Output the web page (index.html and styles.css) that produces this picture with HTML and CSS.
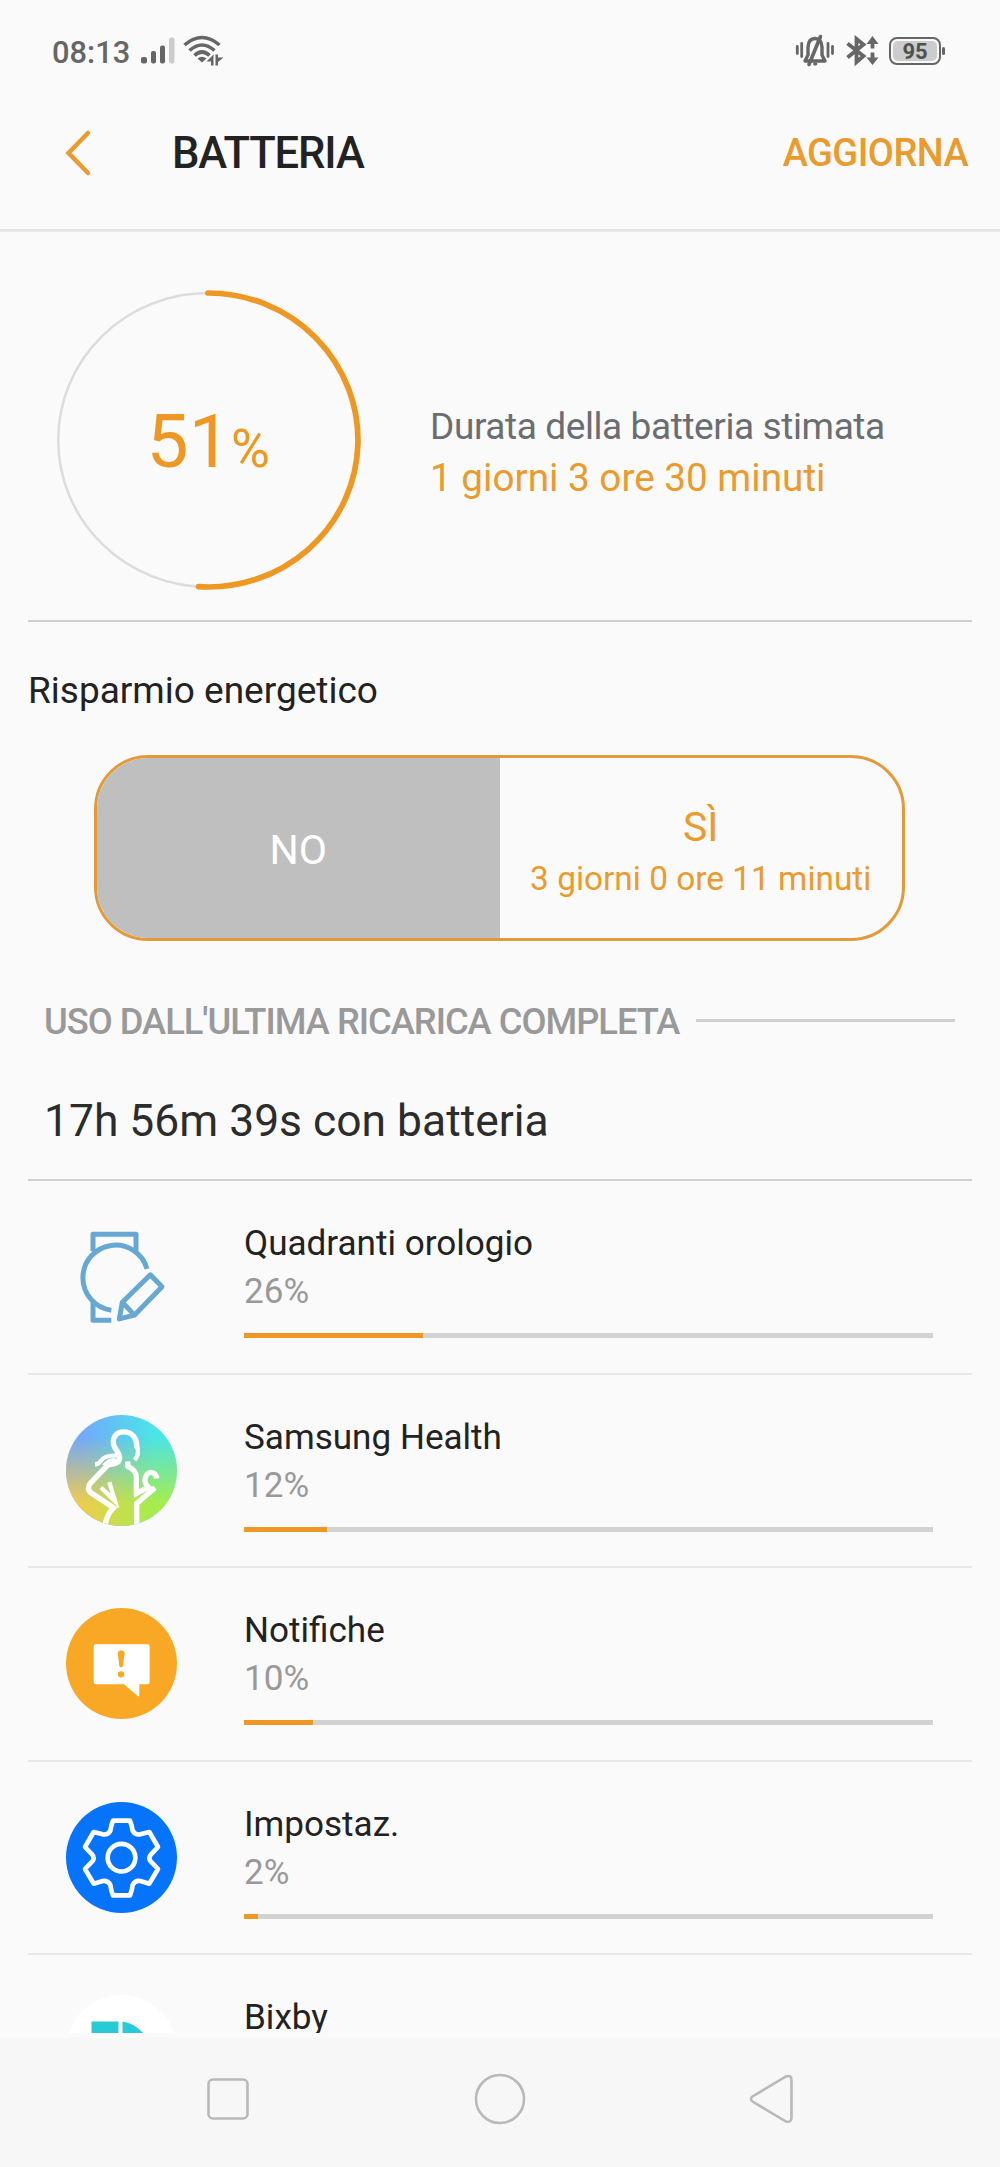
FILE: index.html
```html
<!DOCTYPE html>
<html lang="it">
<head>
<meta charset="utf-8">
<title>Batteria</title>
<link rel="stylesheet" href="styles.css">
</head>
<body>
<div class="screen">
  <div class="status">
    <span class="time">08:13</span>
    <svg class="signal" width="36" height="28" viewBox="0 0 36 28">
      <g fill="#666"><rect x="1" y="20" width="6" height="6.5" rx="2"/><rect x="11" y="14" width="5" height="12.5" rx="2"/><rect x="20" y="8.5" width="5" height="18" rx="2"/></g>
      <rect x="29" y="0.5" width="5.5" height="26" rx="2" fill="#ccc"/>
    </svg>
    <svg class="wifi" width="42" height="32" viewBox="0 0 42 32">
      <g fill="none" stroke="#666" stroke-width="3.6"><path d="M1.500 10Q19-5 36.500 10"/><path d="M6.500 15.500Q19 4.500 31.500 15.500"/><path d="M11.500 20.500Q19 13.500 26.500 20.500"/></g>
      <path d="M14.500 23.500Q19 20 23.500 23.500L19 27.500Z" fill="#666"/>
      <path d="M23.500 26.500L30.500 19.500V30.500H28V26.500ZM32.500 19.500H35V22.500H40.500L35 27V30.500H32.500Z" fill="#666"/>
    </svg>
    <span class="spacer"></span>
    <svg class="bell" width="40" height="34" viewBox="0 0 40 34">
      <g stroke="#666" fill="none" stroke-width="2.800" stroke-linecap="round"><path d="M2.300 12.500V19.500M6.700 9.500V22.500M33 9.500V22.500M37.500 12.500V19.500"/><path stroke-width="3.400" stroke-linejoin="round" d="M10 27L13 21V13Q13.500 4.500 20 4.500Q26.500 4.500 27 13V21L30 27Z"/><path stroke-width="3.600" d="M25.500 2.500L14 30.500"/><path d="M19.500 30H21"/></g>
    </svg>
    <svg class="bluetooth" width="34" height="34" viewBox="0 0 34 34">
      <g stroke="#666" fill="none" stroke-width="3.800"><path d="M2.500 9.500L18.500 22L11.500 28V5L18.500 10.500L2.500 23.500"/><path d="M27.500 6V14.500M27.500 18.500V27"/></g>
      <path d="M21.500 10L27.500 2L33.500 10ZM21.500 23.500L27.500 31L33.500 23.500Z" fill="#666"/>
    </svg>
    <span class="battery"><span class="battery-level">95</span></span>
  </div>

  <header class="header">
    <svg class="back" width="30" height="50" viewBox="0 0 30 50"><path d="M25 5L5.500 25L25 45" fill="none" stroke="#eb9a2e" stroke-width="4.500" stroke-linecap="round"/></svg>
    <h1 class="title">BATTERIA</h1>
    <span class="refresh">AGGIORNA</span>
  </header>

  <section class="summary">
    <svg class="ring" width="306" height="302" viewBox="55 289 306 302">
      <ellipse cx="208" cy="440" rx="149.800" ry="147" fill="none" stroke="#dcdcdc" stroke-width="2.500"/>
      <path d="M208 293A149.800 147 0 1 1 198.600 586.700" fill="none" stroke="#ee9722" stroke-width="5.700" stroke-linecap="round"/>
      <text class="ring-number" x="146.500" y="467">51</text>
      <text class="ring-percent" x="231" y="467">%</text>
    </svg>
    <div class="estimate">
      <div class="estimate-label">Durata della batteria stimata</div>
      <div class="estimate-value">1 giorni 3 ore 30 minuti</div>
    </div>
  </section>

  <section class="saving">
    <h2 class="saving-title">Risparmio energetico</h2>
    <div class="toggle">
      <div class="option off"><span>NO</span></div>
      <div class="option on"><span class="yes">SÌ</span><span class="yes-time">3 giorni 0 ore 11 minuti</span></div>
    </div>
  </section>

  <section class="usage">
    <div class="usage-head"><span class="usage-label">USO DALL'ULTIMA RICARICA COMPLETA</span><i class="rule"></i></div>
    <div class="usage-time">17h 56m 39s con batteria</div>
    <ul class="apps">
      <li class="app">
        <svg class="icon" viewBox="19 33.500 333 333" fill="none" stroke="#66a8d1" stroke-width="15">
          <path stroke-linejoin="round" d="M100 124V73H229V124M262 177A98 98 0 1 0 155 301M100 278V331H155"/>
          <path stroke-linejoin="round" d="M188 277L272 195L307 231L224 316L179 327ZM188 277L224 316"/>
        </svg>
        <div class="info"><span class="name">Quadranti orologio</span><span class="pct">26%</span><div class="bar"><div class="fill" style="width:26%"></div></div></div>
      </li>
      <li class="app">
        <svg class="icon" viewBox="19 44.500 333 333">
          <defs>
            <linearGradient id="sky" x1="0" y1="0" x2="1" y2="0"><stop offset=".15" stop-color="#72a9fb"/><stop offset=".8" stop-color="#4be5e6"/></linearGradient>
            <linearGradient id="ground" x1="0" y1="0" x2="1" y2="0"><stop offset=".1" stop-color="#f3cb4e"/><stop offset=".75" stop-color="#a8eb4c"/></linearGradient>
            <linearGradient id="fade" x1="0" y1="0" x2="0" y2="1"><stop offset=".2" stop-color="#000"/><stop offset=".8" stop-color="#fff"/></linearGradient>
            <mask id="lower"><rect x="19" y="44" width="334" height="334" fill="url(#fade)"/></mask>
            <clipPath id="disc"><circle cx="185.500" cy="211" r="166.500"/></clipPath>
          </defs>
          <circle cx="185.500" cy="211" r="166.500" fill="url(#sky)"/>
          <circle cx="185.500" cy="211" r="166.500" fill="url(#ground)" mask="url(#lower)"/>
          <g clip-path="url(#disc)" fill="none" stroke="#fff" stroke-width="16">
            <path d="M231 145C233 112 216 95 192 95C168 95 156 114 163 137C167 151 181 157 180 173C179 192 159 192 145 194L93 248C84 258 84 270 94 278L162 323Q140 343 136 380"/>
            <path d="M231 136Q241 160 225 180" stroke-width="13"/>
            <path d="M178 166C152 165 131 168 122 184Q116 192 106 193M169 181Q151 176 133 197" stroke-width="13"/>
            <path d="M204 184L205 199Q229 209 230 231V280L266 261C254 249 253 235 261 224C271 211 290 216 291 235M286 263L231 310V380"/>
            <path d="M124 262L166 303L149 246" stroke-width="13"/>
          </g>
        </svg>
        <div class="info"><span class="name">Samsung Health</span><span class="pct">12%</span><div class="bar"><div class="fill" style="width:12%"></div></div></div>
      </li>
      <li class="app">
        <svg class="icon" viewBox="19 41 333 333">
          <circle cx="185.500" cy="207.500" r="166.500" fill="#f9a825"/>
          <path d="M108 150H264Q270 150 270 156V264Q270 270 264 270H239V304Q238 308 234 305L193 270H108Q102 270 102 264V156Q102 150 108 150Z" fill="#fff"/>
          <path d="M174 176Q176 168 184 168Q193 168 195 176L190 215Q189 219 184 219Q180 219 179 215Z" fill="#f9a825"/><circle cx="184" cy="240" r="9.500" fill="#f9a825"/>
        </svg>
        <div class="info"><span class="name">Notifiche</span><span class="pct">10%</span><div class="bar"><div class="fill" style="width:10%"></div></div></div>
      </li>
      <li class="app">
        <svg class="icon" viewBox="19 38 333 333">
          <circle cx="185.500" cy="204.500" r="166.500" fill="#0673fb"/>
          <g fill="none" stroke="#fff" stroke-width="14" stroke-linejoin="round"><circle cx="185.500" cy="205" r="41.500"/><path d="M160 94H211Q217 110 219 124Q226 138 242 135L269 128L295 173L274 195Q264 206 274 217L295 239L269 283L242 275Q226 272 219 287Q217 302 211 318H160Q154 302 152 287Q145 272 129 275L102 283L76 239L97 217Q107 206 97 195L76 173L102 128L129 135Q145 138 152 124Q154 110 160 94Z"/></g>
        </svg>
        <div class="info"><span class="name">Impostaz.</span><span class="pct">2%</span><div class="bar"><div class="fill" style="width:2%"></div></div></div>
      </li>
      <li class="app">
        <svg class="icon" viewBox="0 0 111 111">
          <circle cx="55.500" cy="55.500" r="55.500" fill="#fff"/>
          <path d="M25.500 26.500H52.500V58H25.500ZM56.500 26.500Q69 28 80 41V58H56.500Z" fill="#28cbd5"/>
        </svg>
        <div class="info"><span class="name">Bixby</span></div>
      </li>
    </ul>
  </section>

  <nav class="nav">
    <svg width="52" height="52" viewBox="0 0 52 52"><rect x="6.500" y="6.500" width="39" height="39" rx="4.500"/></svg>
    <svg width="52" height="52" viewBox="0 0 52 52"><circle cx="26" cy="26" r="24"/></svg>
    <svg width="52" height="52" viewBox="0 0 52 52"><path d="M6.500 23.500L40 3.500Q45.500 1.500 45.500 7V44.500Q45.500 50 40 48.500L6.500 28.500Q3.500 26 6.500 23.500Z"/></svg>
  </nav>
</div>
</body>
</html>
```
FILE: styles.css
```css
* { box-sizing: border-box; }
body { margin: 0; background: #fafafa; color: #222; font-family: Roboto, sans-serif; }
h1, h2, ul { margin: 0; padding: 0; font-weight: 400; }
svg { display: block; flex: none; }

.screen { width: 1000px; height: 2167px; display: flex; flex-direction: column; overflow: hidden; }

.status { height: 77px; padding: 28px 59px 0 52px; display: flex; align-items: center; flex: none; }
.time { font-size: 30.8px; font-weight: 500; color: #666; width: 88px; white-space: nowrap; }
.signal { margin-bottom: 3px; }
.wifi { margin: 0 0 3px 7px; }
.spacer { flex: 1; }
.bell { margin-bottom: 3px; }
.bluetooth { margin: 0 10px 3px 10px; }
.battery { width: 52px; height: 28px; margin-bottom: 4px; border: 2px solid #666; border-radius: 8px; padding: 2px; position: relative; }
.battery::after { content: ""; position: absolute; right: -6px; top: 8px; width: 3px; height: 8px; border-radius: 2px; background: #666; }
.battery-level { display: block; height: 20px; border-radius: 5px; background: #ccc; color: #505050; font-weight: 700; font-size: 22px; line-height: 21px; text-align: center; }

.header { height: 155px; border-bottom: 3px solid #e6e6e6; padding: 0 32px 0 63px; display: flex; align-items: center; flex: none; }
.title { flex: 1; padding-left: 79px; font-size: 43.5px; font-weight: 500; letter-spacing: -1.1px; color: #222; }
.refresh { font-size: 38px; font-weight: 500; letter-spacing: -.6px; color: #eb9a2e; }

.summary { height: 388px; margin: 0 28px; padding: 57px 0 0 27px; display: flex; flex: none; }
.ring-number, .ring-percent { fill: #ee9722; font-size: 75px; }
.ring-percent { font-size: 53px; }
.estimate { padding: 112px 0 0 69px; font-size: 37px; line-height: 51px; color: #6b6e70; }
.estimate-label { letter-spacing: -.4px; }
.estimate-value { font-size: 38.7px; color: #eb9a2e; }

.saving { border-top: 2px solid #d0d0d0; margin: 0 28px; height: 379px; flex: none; }
.saving-title { padding-top: 47px; line-height: 44px; font-size: 37px; }
.toggle { width: 811px; height: 186px; margin: 42px 0 0 66px; border: 3px solid #e39a38; border-radius: 54px; overflow: hidden; display: flex; font-size: 41px; }
.option { flex: 1; display: flex; flex-direction: column; align-items: center; justify-content: center; line-height: 51px; padding-top: 4px; }
.off { background: #bfbfbf; color: #fff; }
.on { color: #eb9a2e; padding-top: 9px; }
.yes-time { font-size: 33.4px; }

.usage { margin: 0 28px; flex: 1; overflow: hidden; }
.usage-head { height: 43px; padding: 0 17px 0 16px; display: flex; align-items: center; font-size: 36.3px; line-height: 41px; font-weight: 500; color: #999; white-space: nowrap; }
.usage-label { padding-top: 2px; letter-spacing: -1px; }
.rule { flex: 1; height: 3px; margin-left: 17px; background: #d0d0d0; }
.usage-time { height: 139px; padding: 53px 0 0 16px; font-size: 44.4px; line-height: 52px; color: #2c2c2c; border-bottom: 2px solid #d0d0d0; }
.apps { list-style: none; }
.app { height: 193.5px; border-bottom: 2px solid #e8e8e8; padding: 40px 39px 0 38px; display: flex; }
.icon { width: 111px; height: 111px; }
.info { flex: 1; margin: -2px 0 0 67px; display: flex; flex-direction: column; font-size: 35.1px; line-height: 48px; }
.pct { color: #999; }
.bar { height: 5px; margin-top: 18px; background: #d2d2d2; }
.fill { height: 5px; background: #ee9722; }

.nav { height: 134px; flex: none; border-top: 5px solid #fafafa; background: #f7f7f7; display: flex; justify-content: space-between; padding: 35px 202px 0; }
.nav svg { fill: none; stroke: #b9b9b9; stroke-width: 2.6; }
```
